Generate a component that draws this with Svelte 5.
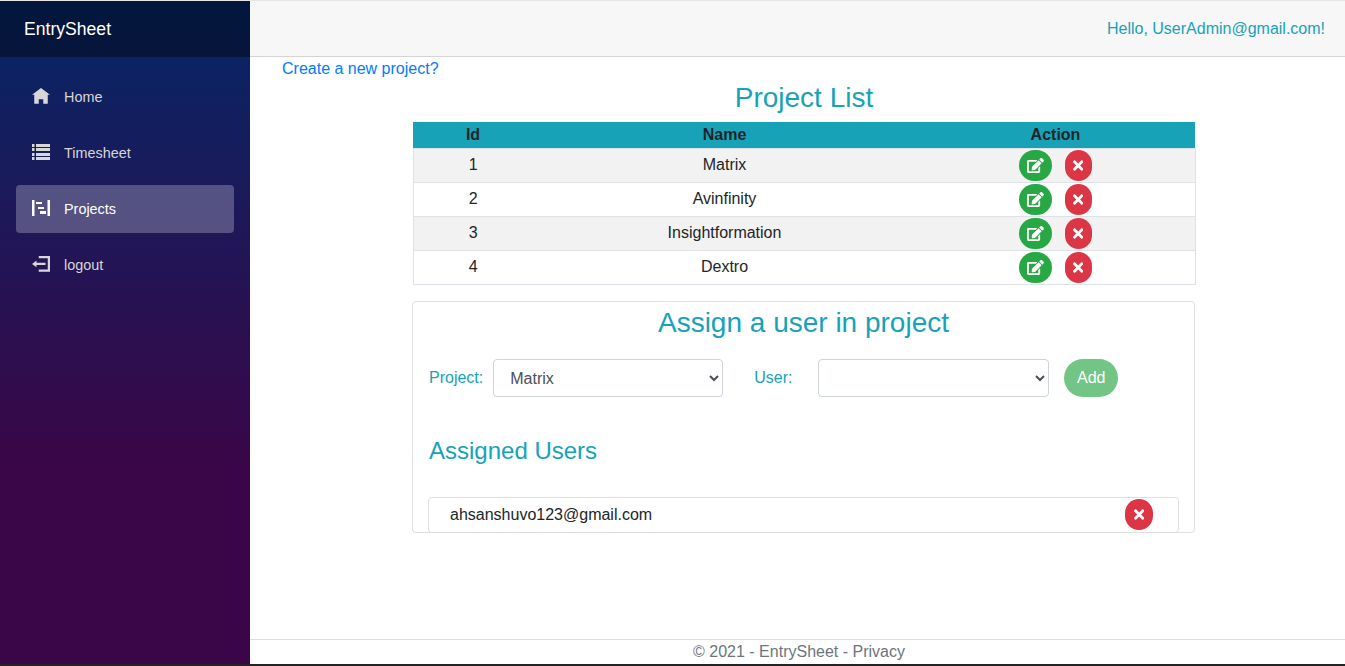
<script>
  const projects = [
    { id: 1, name: "Matrix" },
    { id: 2, name: "Avinfinity" },
    { id: 3, name: "Insightformation" },
    { id: 4, name: "Dextro" }
  ];

  const navItems = [
    { label: "Home", view: "0 0 8 8", d: "M4 0l-4 3h1v4h2v-2h2v2h2v-4.03l1 .03-4-3z" },
    { label: "Timesheet", view: "0 0 18 18", d: "M0 0h2.5v3h-2.5zm4 0h14v3h-14zm-4 4h2.5v3h-2.5zm4 0h14v3h-14zm-4 5h2.5v3h-2.5zm4 0h14v3h-14zm-4 4h2.5v3h-2.5zm4 0h14v3h-14z" },
    { label: "Projects", view: "0 0 18 18", d: "M0 0h2.5v16h-2.5zm15.5 0h2.5v16h-2.5zm-11.5 2h6v2h-6zm2 5h6v2h-6zm2 4h6v3h-6z", active: true },
    { label: "logout", view: "0 0 8 8", d: "M3 0v1h4v5h-4v1h5v-7h-5zm-1 2l-2 1.5 2 1.5v-1h4v-1h-4v-1z" }
  ];

  const editIcon = "M402.6 83.2l90.2 90.2c3.8 3.8 3.8 10 0 13.8L274.4 405.6l-92.8 10.3c-12.4 1.4-22.9-9.1-21.5-21.5l10.3-92.8L388.8 83.2c3.8-3.8 10-3.8 13.8 0zm162-22.9l-48.8-48.8c-15.2-15.2-39.9-15.2-55.2 0l-35.4 35.4c-3.8 3.8-3.8 10 0 13.8l90.2 90.2c3.8 3.8 10 3.8 13.8 0l35.4-35.4c15.2-15.3 15.2-40 0-55.2zM384 346.2V448H64V128h229.8c3.2 0 6.2-1.3 8.5-3.5l40-40c7.6-7.6 2.2-20.5-8.5-20.5H48C21.5 64 0 85.5 0 112v352c0 26.5 21.5 48 48 48h352c26.5 0 48-21.5 48-48V306.2c0-10.7-12.9-16-20.5-8.5l-40 40c-2.2 2.3-3.5 5.3-3.5 8.5z";
  const timesIcon = "M242.72 256l100.07-100.07c12.28-12.28 12.28-32.19 0-44.48l-22.24-22.24c-12.28-12.28-32.19-12.28-44.48 0L176 189.28 75.93 89.21c-12.28-12.28-32.19-12.28-44.48 0L9.21 111.45c-12.28 12.28-12.28 32.19 0 44.48L109.28 256 9.21 356.07c-12.28 12.28-12.28 32.19 0 44.48l22.24 22.24c12.28 12.28 32.2 12.28 44.48 0L176 322.72l100.07 100.07c12.28 12.28 32.2 12.28 44.48 0l22.24-22.24c12.28-12.28 12.28-32.19 0-44.48L242.72 256z";
</script>

<div class="page">
  <aside class="sidebar">
    <div class="brand">EntrySheet</div>
    <nav>
      {#each navItems as item}
        <div class="nav-item">
          <a href="#top" class:active={item.active}>
            <svg class="nav-icon" viewBox={item.view}><path d={item.d} /></svg>
            {item.label}
          </a>
        </div>
      {/each}
    </nav>
  </aside>

  <div class="main">
    <header class="top-row">
      <a href="#top" class="hello">Hello, UserAdmin@gmail.com!</a>
    </header>

    <div class="content">
      <a href="#top" class="create">Create a new project?</a>
      <h2>Project List</h2>
      <table>
        <colgroup>
          <col class="col-id" />
          <col class="col-name" />
          <col />
        </colgroup>
        <thead>
          <tr><th>Id</th><th>Name</th><th>Action</th></tr>
        </thead>
        <tbody>
          {#each projects as p}
            <tr>
              <td>{p.id}</td>
              <td>{p.name}</td>
              <td>
                <div class="actions">
                  <button class="btn edit" aria-label="Edit">
                    <svg viewBox="0 0 576 512"><path d={editIcon} /></svg>
                  </button>
                  <button class="btn del" aria-label="Delete">
                    <svg viewBox="0 0 352 512"><path d={timesIcon} /></svg>
                  </button>
                </div>
              </td>
            </tr>
          {/each}
        </tbody>
      </table>

      <section class="card">
        <h2>Assign a user in project</h2>
        <div class="form-row">
          <label for="project">Project:</label>
          <select id="project">
            <option>Matrix</option>
          </select>
          <label for="user" class="user-label">User:</label>
          <select id="user">
            <option></option>
          </select>
          <button class="add">Add</button>
        </div>
        <h4>Assigned Users</h4>
        <div class="user-item">
          <span>ahsanshuvo123@gmail.com</span>
          <button class="btn del round" aria-label="Remove">
            <svg viewBox="0 0 352 512"><path d={timesIcon} /></svg>
          </button>
        </div>
      </section>
    </div>

    <footer>© 2021 - EntrySheet - <a href="#top">Privacy</a></footer>
  </div>
</div>

<style>
:global(body) {
  margin: 0;
  font-family: "Liberation Sans", Arial, sans-serif;
  font-size: 16px;
  color: #212529;
}
.page {
  display: flex;
  height: 666px;
  box-sizing: border-box;
  border-top: 1px solid #e6e6e6;
  border-bottom: 2px solid #232323;
  overflow: hidden;
}
.sidebar {
  width: 250px;
  flex-shrink: 0;
  background-image: linear-gradient(180deg, rgb(5, 39, 103) 0%, #3a0647 70%);
}
.brand {
  height: 56px;
  box-sizing: border-box;
  padding-left: 24px;
  line-height: 56px;
  font-size: 17.6px;
  color: #fff;
  background: rgba(0, 0, 0, 0.4);
}
.nav-item {
  height: 56px;
  padding: 4px 16px 0;
  font-size: 14.4px;
  box-sizing: border-box;
}
.nav-item:first-child {
  padding-top: 16px;
  height: 68px;
}
.nav-item a {
  display: flex;
  align-items: center;
  height: 48px;
  border-radius: 4px;
  color: #d7d7d7;
  text-decoration: none;
}
.nav-item a.active {
  background: rgba(255, 255, 255, 0.25);
  color: #fff;
}
.nav-icon {
  width: 18px;
  height: 18px;
  margin-left: 16px;
  margin-right: 14px;
  fill: currentColor;
}
.main {
  flex: 1;
  display: flex;
  flex-direction: column;
  min-width: 0;
}
.top-row {
  height: 56px;
  box-sizing: border-box;
  flex-shrink: 0;
  display: flex;
  align-items: center;
  justify-content: flex-end;
  padding-right: 20px;
  background: #f7f7f7;
  border-bottom: 1px solid #d6d5d5;
}
.hello {
  color: #17a2b8;
  text-decoration: none;
}
.content {
  flex: 1;
  padding: 0 19px 0 32px;
}
.create {
  display: block;
  line-height: 24px;
  color: #007bff;
  text-decoration: none;
}
h2 {
  margin: 0 0 7px;
  font-size: 28px;
  font-weight: 400;
  line-height: 1.2;
  text-align: center;
  color: #17a2b8;
}
table {
  width: 783px;
  margin: 0 auto;
  border-collapse: collapse;
  table-layout: fixed;
}
.col-id {
  width: 120px;
}
.col-name {
  width: 383px;
}
th {
  height: 26px;
  padding: 0;
  background: #17a2b8;
  font-weight: 700;
  text-align: center;
}
td {
  height: 34px;
  box-sizing: border-box;
  padding: 0;
  text-align: center;
  border: 1px solid #dee2e6;
  border-left: 0;
  border-right: 0;
}
td:first-child {
  border-left: 1px solid #dee2e6;
}
td:last-child {
  border-right: 1px solid #dee2e6;
}
tbody tr:nth-child(odd) {
  background: #f2f2f2;
}
.actions {
  display: flex;
  justify-content: center;
  gap: 13px;
}
.btn {
  display: flex;
  align-items: center;
  justify-content: center;
  height: 31px;
  padding: 0;
  border: 0;
  color: #fff;
}
.btn svg {
  fill: #fff;
  height: 15px;
}
.edit {
  width: 33px;
  border-radius: 16px;
  background: #28a745;
}
.del {
  width: 27px;
  border-radius: 14px;
  background: #dc3545;
}
.round {
  width: 28px;
}
.card {
  width: 783px;
  height: 232px;
  box-sizing: border-box;
  margin: 16px 0 0 130px;
  padding: 4px 15px 0;
  border: 1px solid #dfdfdf;
  border-radius: 4px;
  overflow: hidden;
}
.card h2 {
  margin-bottom: 20px;
}
.form-row {
  display: flex;
  align-items: center;
  height: 38px;
  padding-left: 1px;
}
label {
  color: #17a2b8;
}
.form-row select {
  height: 38px;
  box-sizing: border-box;
  padding: 6px 12px;
  font-family: inherit;
  font-size: 16px;
  color: #495057;
  background: #fff;
  border: 1px solid #ced4da;
  border-radius: 4px;
}
#project {
  width: 230px;
  margin-left: 10px;
}
.user-label {
  width: 64px;
  margin-left: 31px;
}
#user {
  width: 231px;
}
.add {
  height: 38px;
  width: 54px;
  margin-left: 15px;
  padding: 0;
  border: 0;
  border-radius: 19px;
  font-family: inherit;
  font-size: 16px;
  color: #fff;
  background: #28a745;
  opacity: 0.65;
}
h4 {
  margin: 40px 0 31px 1px;
  font-size: 24px;
  font-weight: 400;
  line-height: 1.2;
  color: #17a2b8;
}
.user-item {
  display: flex;
  align-items: center;
  justify-content: space-between;
  height: 36px;
  box-sizing: border-box;
  padding: 0 25px 0 21px;
  border: 1px solid #dfdfdf;
  border-radius: 4px;
}
footer {
  height: 24px;
  flex-shrink: 0;
  line-height: 24px;
  text-align: center;
  padding-left: 3px;
  color: #6c757d;
  border-top: 1px solid #dedede;
}
footer a {
  color: inherit;
  text-decoration: none;
}
</style>
